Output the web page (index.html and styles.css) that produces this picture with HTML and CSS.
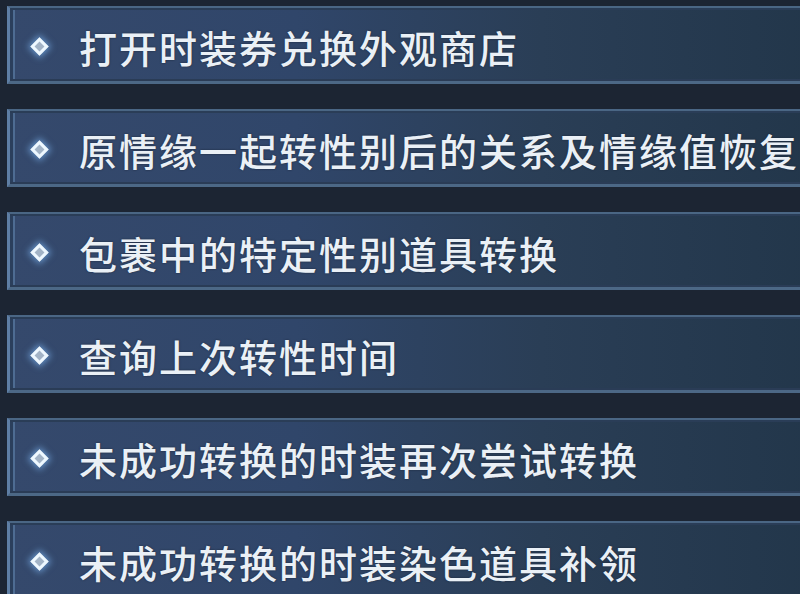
FILE: index.html
```html
<!DOCTYPE html>
<html lang="zh">
<head>
<meta charset="utf-8">
<link rel="stylesheet" href="styles.css">
</head>
<body>
<div class="menu">
  <div class="row"><span class="gem"></span><span class="label">打开时装券兑换外观商店</span></div>
  <div class="row"><span class="gem"></span><span class="label">原情缘一起转性别后的关系及情缘值恢复</span></div>
  <div class="row"><span class="gem"></span><span class="label">包裹中的特定性别道具转换</span></div>
  <div class="row"><span class="gem"></span><span class="label">查询上次转性时间</span></div>
  <div class="row"><span class="gem"></span><span class="label">未成功转换的时装再次尝试转换</span></div>
  <div class="row"><span class="gem"></span><span class="label">未成功转换的时装染色道具补领</span></div>
</div>
</body>
</html>
```
FILE: styles.css
```css
html, body {
  margin: 0;
  padding: 0;
  width: 800px;
  height: 594px;
  overflow: hidden;
  background: #1c2533;
}
.menu {
  display: flex;
  flex-direction: column;
  gap: 25px;
  padding: 6px 0 0 7px;
}
.row {
  box-sizing: border-box;
  width: 820px;
  height: 78px;
  display: flex;
  align-items: center;
  border-top: 2px solid #4a6684;
  border-bottom: 3px solid #4c6886;
  border-left: 3px solid #5e7ea4;
  background: linear-gradient(90deg, #35496c 0%, #30466a 35%, #2a3e56 65%, #22364a 100%);
  box-shadow: inset 0 2px 0 #2a3d57, inset 0 -2px 0 #2a3c56, inset 3px 0 0 #2b3f5c, inset 5px 0 0 #4e6c92;
}
.gem {
  flex: none;
  width: 13px;
  height: 13px;
  margin-left: 23px;
  margin-top: 3px;
  transform: rotate(45deg);
  box-sizing: border-box;
  border: 3px solid #eef8ff;
  background: #a2b3c6;
  box-shadow: 0 0 6px 2px rgba(130, 190, 255, 0.6);
}
.label {
  margin-left: 33px;
  margin-top: 4px;
  font-family: "Noto Sans CJK SC", "Noto Sans", sans-serif;
  font-size: 38px;
  font-weight: 500;
  letter-spacing: 2px;
  line-height: 1;
  color: #eaf0f6;
  white-space: nowrap;
  text-shadow: 0 0 2px #1a2436;
}
```
